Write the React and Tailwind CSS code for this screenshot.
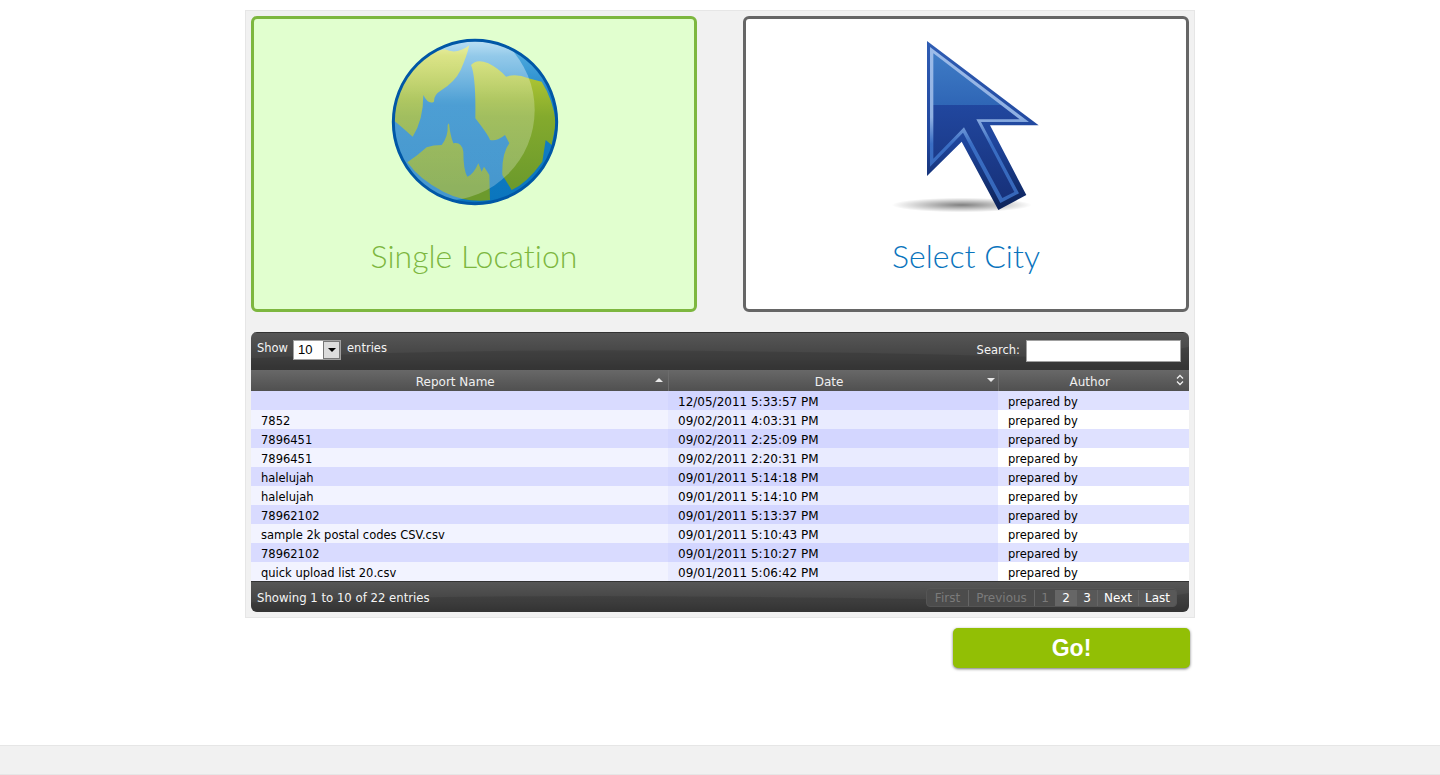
import React from "react";

const rows = [
    ["", "12/05/2011 5:33:57 PM"],
    ["7852", "09/02/2011 4:03:31 PM"],
    ["7896451", "09/02/2011 2:25:09 PM"],
    ["7896451", "09/02/2011 2:20:31 PM"],
    ["halelujah", "09/01/2011 5:14:18 PM"],
    ["halelujah", "09/01/2011 5:14:10 PM"],
    ["78962102", "09/01/2011 5:13:37 PM"],
    ["sample 2k postal codes CSV.csv", "09/01/2011 5:10:43 PM"],
    ["78962102", "09/01/2011 5:10:27 PM"],
    ["quick upload list 20.csv", "09/01/2011 5:06:42 PM"],
];

const pages = [
    { label: "First", off: true, cls: "w-[42px]" },
    { label: "Previous", off: true, cls: "w-[66px]" },
    { label: "1", off: true, cls: "w-[21px]" },
    { label: "2", cls: "w-[21px] bg-[#666666]" },
    { label: "3", cls: "w-[21px] bg-[#585858]" },
    { label: "Next", cls: "w-[41px] bg-[#585858]" },
    { label: "Last", cls: "w-[37px] bg-[#585858]" },
];

function Globe() {
    return (
        <svg width="170" height="168" viewBox="60 54 510 504">
            <defs>
                <linearGradient id="land" gradientUnits="userSpaceOnUse" x1="0" y1="80" x2="0" y2="500">
                    <stop offset="0" stopColor="#ccd838" />
                    <stop offset="0.5" stopColor="#84aa2d" />
                    <stop offset="1" stopColor="#6c9a2c" />
                </linearGradient>
                <linearGradient id="shine" x1="0" y1="0" x2="0" y2="1">
                    <stop offset="0" stopColor="#fff" stopOpacity="0.85" />
                    <stop offset="0.2" stopColor="#fff" stopOpacity="0.4" />
                    <stop offset="0.45" stopColor="#fff" stopOpacity="0.24" />
                    <stop offset="1" stopColor="#fff" stopOpacity="0.24" />
                </linearGradient>
                <linearGradient id="sky" x1="0" y1="0" x2="0" y2="1">
                    <stop offset="0" stopColor="#5fb4e4" />
                    <stop offset="0.4" stopColor="#1580c6" />
                    <stop offset="1" stopColor="#0a75bd" />
                </linearGradient>
                <clipPath id="ball">
                    <circle cx="315" cy="306" r="245" />
                </clipPath>
            </defs>
            <g clipPath="url(#ball)">
                <rect x="60" y="54" width="510" height="504" fill="url(#sky)" />
                <g fill="url(#land)">
                    <path d="M225 88Q260 105 298 76Q290 110 272 150Q255 185 215 210Q190 225 192 245Q175 255 160 225Q160 300 128 350Q100 325 70 300Q70 190 130 125Q175 95 225 88Z" />
                    <path d="M303 135Q320 115 355 130Q385 145 408 170Q440 160 475 175L515 185Q550 240 558 310L545 375L527 360L517 425Q470 490 425 510L397 465Q395 400 418 370L405 345Q380 365 360 360Q355 345 316 295Q318 170 303 135Z" />
                    <path d="M112 427Q145 405 170 382Q190 375 215 375Q235 350 233 315L237 310Q240 345 250 370Q275 365 280 395Q280 450 292 470Q310 465 325 430L335 455L342 440L358 465L360 540Q290 550 220 515Q150 480 112 427Z" />
                </g>
                <circle cx="222" cy="270" r="272" fill="url(#shine)" />
            </g>
            <circle cx="315" cy="306" r="245" fill="none" stroke="#0057a6" strokeWidth="9" />
        </svg>
    );
}

function Arrow() {
    return (
        <svg width="152" height="176" viewBox="60 54 456 528">
            <defs>
                <radialGradient id="shadow">
                    <stop offset="0" stopColor="#000" stopOpacity="0.5" />
                    <stop offset="0.55" stopColor="#000" stopOpacity="0.22" />
                    <stop offset="1" stopColor="#000" stopOpacity="0" />
                </radialGradient>
                <linearGradient id="edge" x1="0" y1="0" x2="0" y2="1">
                    <stop offset="0" stopColor="#2f5db4" />
                    <stop offset="0.6" stopColor="#1f459c" />
                    <stop offset="1" stopColor="#0c2258" />
                </linearGradient>
                <linearGradient id="band" x1="0" y1="0" x2="0" y2="1">
                    <stop offset="0" stopColor="#9dbce9" />
                    <stop offset="0.45" stopColor="#8fb0e2" />
                    <stop offset="0.62" stopColor="#3a6ec4" />
                    <stop offset="1" stopColor="#3566b8" />
                </linearGradient>
                <linearGradient id="fill" x1="0" y1="0" x2="0" y2="1">
                    <stop offset="0" stopColor="#3f7cc6" />
                    <stop offset="0.355" stopColor="#2f66b6" />
                    <stop offset="0.355" stopColor="#21479f" />
                    <stop offset="1" stopColor="#17317a" />
                </linearGradient>
            </defs>
            <ellipse cx="272" cy="555" rx="210" ry="22" fill="url(#shadow)" />
            <polygon points="168,63 503,316 357,316 466,525 382,570 272,365 168,468" fill="url(#edge)" />
            <polygon points="177,81 474,306 330,306 444,520 388,549 276,338 177,440" fill="url(#band)" />
            <polygon points="187,100 446,298 316,298 430,516 394,534 279,322 187,416" fill="url(#fill)" />
        </svg>
    );
}

function Tile({ title, active, children }) {
    return (
        <div
            className={`h-[296px] w-[446px] rounded-md border-[3px] ${
                active ? "border-[#7db73f] bg-[#e1ffcf] text-[#7db73f]" : "border-[#666666] bg-white text-[#0a74bd]"
            }`}
        >
            <div className="flex h-[205px] items-start justify-center pt-[19px]">{children}</div>
            <div className="text-center font-['Lato',sans-serif] text-[32px] leading-[64px] font-light [font-variant-ligatures:none]">{title}</div>
        </div>
    );
}

function Toolbar({ children, className }) {
    return (
        <div className={`relative flex justify-between overflow-hidden bg-gradient-to-b from-[#565656] to-[#3a3a3a] ${className}`}>
            <svg className="absolute inset-0 h-full w-full" viewBox="0 0 938 38" preserveAspectRatio="none">
                <path d="M0 26Q200 16 420 18T760 24T938 14V38H0Z" fill="#000" fillOpacity="0.1" />
            </svg>
            {children}
        </div>
    );
}

export default function App() {
    return (
        <div className="min-h-[775px] bg-white font-['DejaVu_Sans',sans-serif] text-[11.5px] text-black">
            <div className="mx-auto w-[950px] pt-[10px]">
                <div className="border border-[#e6e6e6] bg-[#f1f1f1] p-[5px]">
                    <div className="flex justify-between">
                        <Tile title="Single Location" active>
                            <div className="pl-[2px]">
                                <Globe />
                            </div>
                        </Tile>
                        <Tile title="Select City">
                            <div className="pl-[1px]">
                                <Arrow />
                            </div>
                        </Tile>
                    </div>

                    <div className="mt-5 overflow-hidden rounded-md">
                        <Toolbar className="h-[38px] items-start border-t border-[#333333] px-[6px] pt-[7px] text-[#f4f4f4]">
                            <div className="relative flex items-start leading-[16px]">
                                <span>Show</span>
                                <span className="mr-[6px] ml-[5px] flex h-5 w-12 items-center justify-between border border-[#a0a0a0] bg-white pl-1 font-['Liberation_Sans',sans-serif] text-[13px] text-black">
                                    10
                                    <span className="flex h-[18px] w-[17px] items-center justify-center border border-[#777777] bg-[#dcdcdc]">
                                        <span className="border-x-[4px] border-t-[4px] border-x-transparent border-t-black" />
                                    </span>
                                </span>
                                <span>entries</span>
                            </div>
                            <div className="relative mr-[2px] flex items-start gap-[6px] leading-[20px]">
                                <span>Search:</span>
                                <span className="h-[22px] w-[155px] border border-[#a0a0a0] bg-white" />
                            </div>
                        </Toolbar>

                        <table className="w-full table-fixed border-collapse">
                            <colgroup>
                                <col className="w-[417px]" />
                                <col className="w-[330px]" />
                                <col className="w-[191px]" />
                            </colgroup>
                            <thead>
                                <tr className="h-[21px] bg-gradient-to-b from-[#686868] to-[#505050] text-[12px] text-[#f0f0f0]">
                                    <th className="relative border-r border-[#6c6c6c] pt-[3px] pr-2 leading-[16px] font-normal">
                                        Report Name
                                        <span className="absolute top-[8px] right-[5px] border-x-[4px] border-b-[4px] border-x-transparent border-b-[#e8e8e8]" />
                                    </th>
                                    <th className="relative border-r border-[#6c6c6c] pt-[3px] pr-2 leading-[16px] font-normal">
                                        Date
                                        <span className="absolute top-[8px] right-[3px] border-x-[4px] border-t-[4px] border-x-transparent border-t-[#e8e8e8]" />
                                    </th>
                                    <th className="relative pt-[3px] pr-2 leading-[16px] font-normal">
                                        Author
                                        <svg className="absolute top-[4px] right-[5px]" width="8" height="12" viewBox="0 0 8 12" fill="none" stroke="#f0f0f0" strokeWidth="1.3">
                                            <path d="M1 4.5L4 1.5L7 4.5" />
                                            <path d="M1 7.5L4 10.5L7 7.5" />
                                        </svg>
                                    </th>
                                </tr>
                            </thead>
                            <tbody>
                                {rows.map((row, i) => (
                                    <tr key={i} className="h-[19px] leading-[16px]">
                                        <td className={`overflow-hidden pt-[3px] pl-[10px] whitespace-nowrap ${i % 2 ? "bg-[#f2f3ff]" : "bg-[#d9dbff]"}`}>{row[0]}</td>
                                        <td className={`pt-[3px] pl-[10px] text-[12px] ${i % 2 ? "bg-[#e9ebff]" : "bg-[#d3d6ff]"}`}>{row[1]}</td>
                                        <td className={`pt-[3px] pl-[10px] ${i % 2 ? "bg-white" : "bg-[#dfe1ff]"}`}>prepared by</td>
                                    </tr>
                                ))}
                            </tbody>
                        </table>

                        <Toolbar className="h-[31px] items-center border-t border-[#333333] pr-3 pl-[6px] text-[#f4f4f4]">
                            <span className="relative mt-[4px] text-[11.7px]">Showing 1 to 10 of 22 entries</span>
                            <div className="relative flex h-[19px] divide-x divide-[#666666] overflow-hidden rounded border border-[#555555] bg-[#4c4c4c] pt-[1px] text-[12px] leading-[17px]">
                                {pages.map((p) => (
                                    <span key={p.label} className={`text-center ${p.cls} ${p.off ? "text-[#7b7b7b]" : "text-white"}`}>
                                        {p.label}
                                    </span>
                                ))}
                            </div>
                        </Toolbar>
                    </div>
                </div>

                <div className="mt-[10px] flex justify-end pr-[5px]">
                    <button className="h-10 w-[237px] rounded-[5px] bg-[#92bf05] font-['Liberation_Sans',sans-serif] text-[23px] font-bold text-white shadow-[0_1px_3px_rgba(0,0,0,0.55)]">
                        Go!
                    </button>
                </div>
            </div>

            <div className="mt-[77px] h-[30px] border-t border-b border-[#e6e6e6] bg-[#f1f1f1]" />
        </div>
    );
}
